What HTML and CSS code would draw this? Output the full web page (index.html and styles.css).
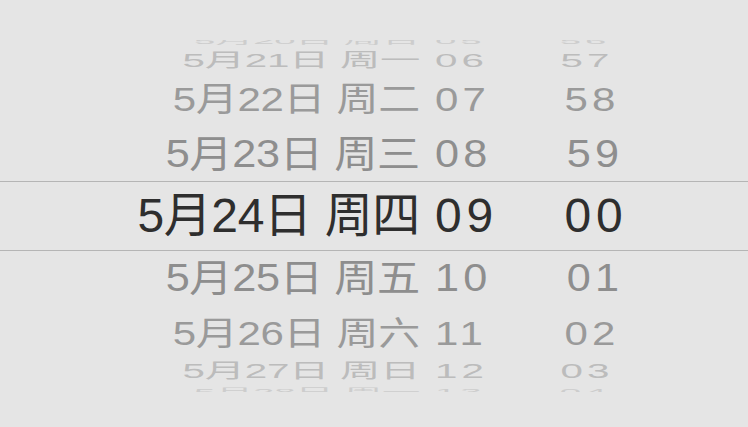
FILE: index.html
```html
<!DOCTYPE html>
<html lang="zh-CN">
<head>
<meta charset="utf-8">
<title>日期时间选择器</title>
<link rel="stylesheet" href="styles.css">
</head>
<body>
<div class="picker">
  <div class="wheel">
    <div class="col col-date">
      <div class="row rm4">5月20日 周日</div>
      <div class="row rm3">5月21日 周一</div>
      <div class="row rm2">5月22日 周二</div>
      <div class="row rm1">5月23日 周三</div>
      <div class="row r0">5月24日 周四</div>
      <div class="row rp1">5月25日 周五</div>
      <div class="row rp2">5月26日 周六</div>
      <div class="row rp3">5月27日 周日</div>
      <div class="row rp4">5月28日 周一</div>
    </div>
    <div class="col col-hour">
      <div class="row rm4">05</div>
      <div class="row rm3">06</div>
      <div class="row rm2">07</div>
      <div class="row rm1">08</div>
      <div class="row r0">09</div>
      <div class="row rp1">10</div>
      <div class="row rp2">11</div>
      <div class="row rp3">12</div>
      <div class="row rp4">13</div>
    </div>
    <div class="col col-min">
      <div class="row rm4">56</div>
      <div class="row rm3">57</div>
      <div class="row rm2">58</div>
      <div class="row rm1">59</div>
      <div class="row r0">00</div>
      <div class="row rp1">01</div>
      <div class="row rp2">02</div>
      <div class="row rp3">03</div>
      <div class="row rp4">04</div>
    </div>
  </div>
  <div class="band"></div>
</div>
</body>
</html>
```

FILE: styles.css
```css
html, body {
  margin: 0;
  padding: 0;
  background: #e5e5e5;
}

.picker {
  position: relative;
  width: 748px;
  height: 427px;
  overflow: hidden;
  font-family: "Liberation Sans", "Noto Sans CJK SC", sans-serif;
  font-size: 48px;
}

.wheel {
  display: flex;
  margin-top: 40px;
  height: 352px;
  overflow: hidden;
}

.col {
  display: flex;
  flex-direction: column;
  margin-top: -2px;
}

.col-date {
  width: 420px;
  text-align: right;
  letter-spacing: -0.35px;
}
.col-date .row { transform-origin: right center; }

.col-hour {
  width: 105px;
  margin-left: 15px;
  text-align: left;
  letter-spacing: 0.1em;
}
.col-hour .row { transform-origin: left center; }

.col-min {
  width: 112px;
  text-align: center;
  letter-spacing: 0.1em;
}
.col-min .row { transform-origin: center center; }

.row {
  flex: none;
  height: var(--h);
  line-height: var(--h);
  white-space: nowrap;
  color: var(--c);
  transform: translateX(var(--tx, 0px)) scale(var(--sx), var(--sy));
}

.rm4 { --h: 6px;  --sx: 0.8;   --sy: 0.18; --c: #cdcdcd; }
.rm3 { --h: 33px; --sx: 0.84;  --sy: 0.4;  --c: #bcbcbc; }
.rm2 { --h: 45px; --sx: 0.875; --sy: 0.7;  --c: #9a9a9a; }
.rm1 { --h: 63px; --sx: 0.9;   --sy: 0.79; --c: #8e8e8e; }
.r0  { --h: 62px; --sx: 1;     --sy: 1;    --c: #2e2e2e; }
.rp1 { --h: 62px; --sx: 0.9;   --sy: 0.79; --c: #8e8e8e; }
.rp2 { --h: 49px; --sx: 0.875; --sy: 0.68; --c: #9a9a9a; }
.rp3 { --h: 27px; --sx: 0.84;  --sy: 0.42; --c: #bcbcbc; }
.rp4 { --h: 14px; --sx: 0.8;   --sy: 0.18; --c: #cdcdcd; }

.col-min .rm1, .col-min .rp1 { --tx: -1px; }
.col-min .rm2, .col-min .rp2 { --tx: -4px; }
.col-min .rm3, .col-min .rp3 { --tx: -9px; }
.col-min .rm4, .col-min .rp4 { --tx: -11px; }

.band {
  position: absolute;
  left: 0;
  right: 0;
  top: 181px;
  height: 68px;
  border-top: 1px solid #b5b5b5;
  border-bottom: 1px solid #b5b5b5;
}
```
